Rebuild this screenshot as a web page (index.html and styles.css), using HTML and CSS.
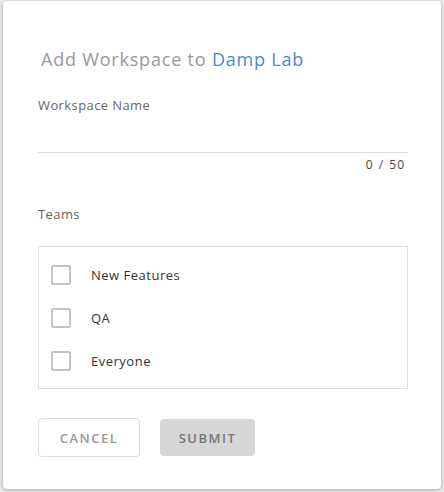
FILE: index.html
```html
<!DOCTYPE html>
<html>
<head>
<meta charset="utf-8">
<link rel="stylesheet" href="styles.css">
</head>
<body>
<div class="dialog">
  <h1 class="title">Add Workspace to <span class="lab">Damp Lab</span></h1>
  <label class="label">Workspace Name</label>
  <div class="input"></div>
  <div class="counter">0 / 50</div>
  <div class="label teams-label">Teams</div>
  <div class="teams">
    <div class="team"><span class="box"></span><span>New Features</span></div>
    <div class="team"><span class="box"></span><span>QA</span></div>
    <div class="team"><span class="box"></span><span>Everyone</span></div>
  </div>
  <div class="actions">
    <button class="btn cancel">CANCEL</button>
    <button class="btn submit">SUBMIT</button>
  </div>
</div>
</body>
</html>
```
FILE: styles.css
```css
html, body { margin: 0; padding: 0; }
body {
  background: #ececec;
  width: 444px;
  height: 492px;
  font-family: "Open Sans", "Noto Sans", sans-serif;
  overflow: hidden;
}
.dialog {
  box-sizing: border-box;
  margin: 1px 3px 0 3px;
  width: 438px;
  height: 488px;
  background: #fff;
  border-radius: 4px;
  box-shadow: 0 1px 4px rgba(0,0,0,0.3);
  padding: 0 33px 0 35px;
  display: flex;
  flex-direction: column;
}
.title {
  margin: 47px 0 0 3px;
  font-size: 18px;
  font-weight: 400;
  color: #999;
  line-height: 22px;
  letter-spacing: 0.8px;
}
.lab { color: #4a8ad6; }
.label {
  margin-top: 27px;
  font-size: 13px;
  color: #666;
  line-height: 16px;
  letter-spacing: 0.4px;
}
.input {
  height: 39px;
  border-bottom: 1px solid #dcdcdc;
}
.counter {
  text-align: right;
  font-size: 12px;
  color: #444;
  margin-top: 4px;
  padding-right: 3px;
  line-height: 15px;
  letter-spacing: 1px;
  word-spacing: 1px;
}
.teams-label { margin-top: 34px; }
.teams {
  margin-top: 24px;
  border: 1px solid #e0e0e0;
  height: 143px;
  box-sizing: border-box;
  padding: 18px 0 0 12px;
  display: flex;
  flex-direction: column;
  gap: 23px;
}
.team {
  display: flex;
  align-items: center;
  gap: 20px;
  font-size: 13px;
  color: #333;
  height: 20px;
  letter-spacing: 0.5px;
}
.box {
  box-sizing: border-box;
  width: 20px;
  height: 20px;
  border: 2px solid #c4c4c4;
  border-radius: 2px;
}
.actions {
  margin-top: 29px;
  display: flex;
  align-items: center;
  gap: 20px;
}
.btn {
  font-family: inherit;
  font-size: 13px;
  font-weight: 600;
  letter-spacing: 1.5px;
  border-radius: 4px;
  height: 39px;
  box-sizing: border-box;
  padding: 0;
}
.cancel {
  width: 102px;
  background: #fff;
  border: 1px solid #ddd;
  color: #999;
}
.submit {
  width: 95px;
  height: 37px;
  background: #d6d6d6;
  border: none;
  color: #777;
}
```
